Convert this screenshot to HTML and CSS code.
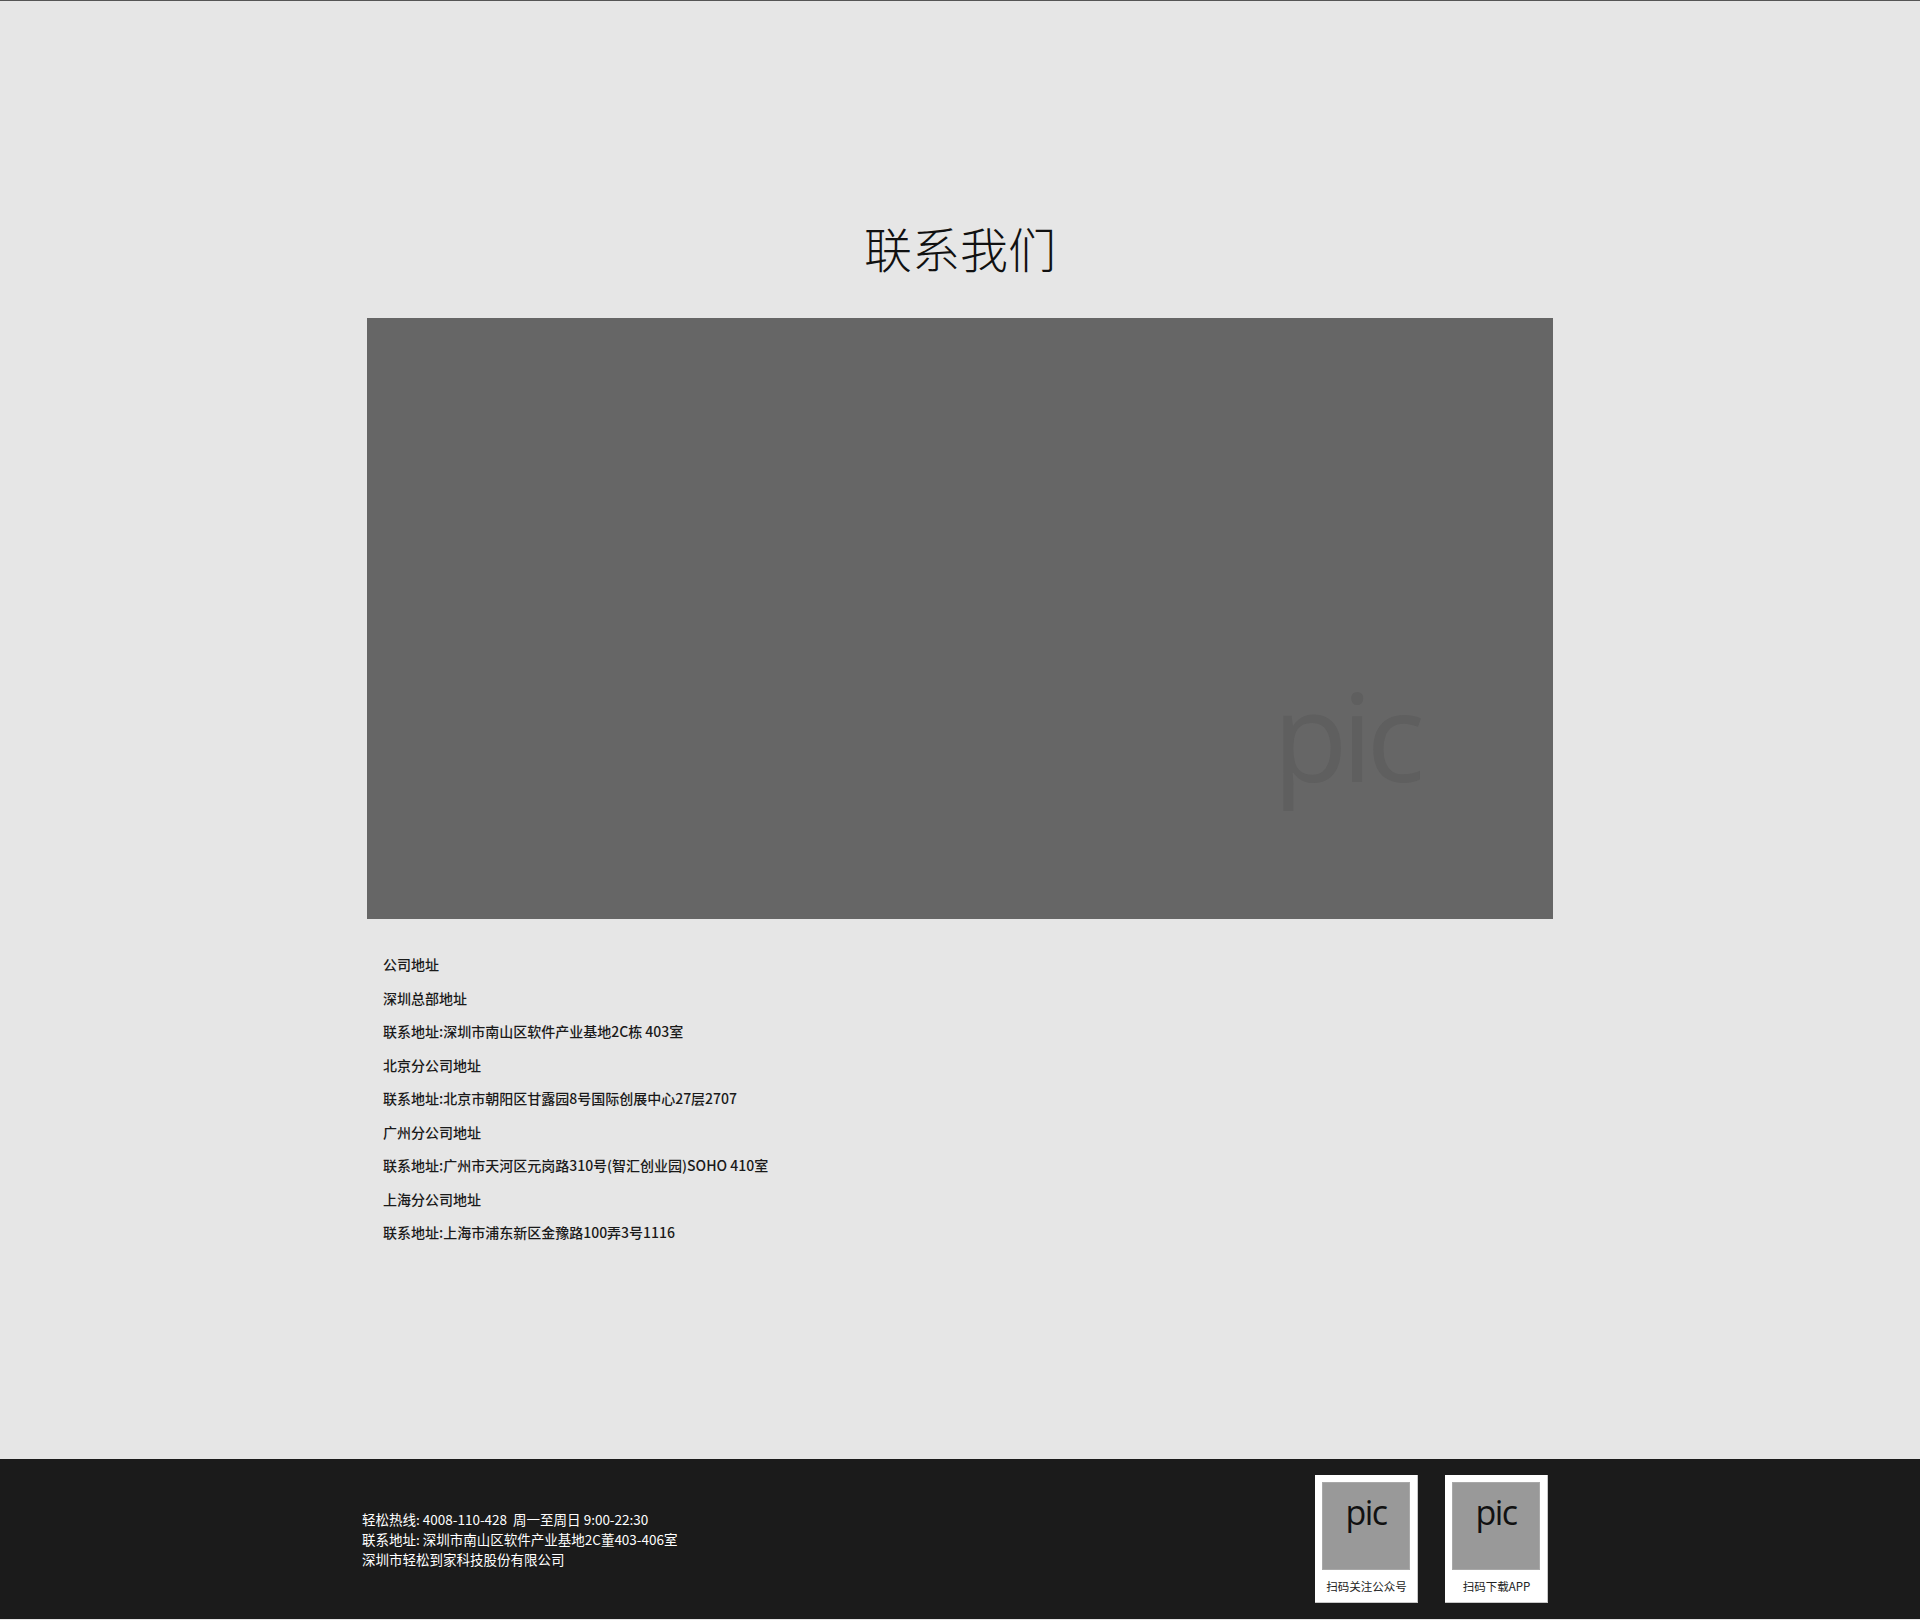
FILE: index.html
```html
<!DOCTYPE html>
<html lang="zh-CN">
<head>
<meta charset="utf-8">
<title>联系我们</title>
<link rel="stylesheet" href="styles.css">
</head>
<body>
<main class="page">
  <h1 class="title">联系我们</h1>
  <div class="pic-box"><span class="pic-text">pic</span></div>
  <ul class="addr">
    <li>公司地址</li>
    <li>深圳总部地址</li>
    <li>联系地址:深圳市南山区软件产业基地2C栋 403室</li>
    <li>北京分公司地址</li>
    <li>联系地址:北京市朝阳区甘露园8号国际创展中心27层2707</li>
    <li>广州分公司地址</li>
    <li>联系地址:广州市天河区元岗路310号(智汇创业园)SOHO 410室</li>
    <li>上海分公司地址</li>
    <li>联系地址:上海市浦东新区金豫路100弄3号1116</li>
  </ul>
</main>
<footer class="footer">
  <div class="footer-inner">
    <div class="footer-text">
      <p>轻松热线: 4008-110-428&nbsp; 周一至周日 9:00-22:30</p>
      <p>联系地址: 深圳市南山区软件产业基地2C董403-406室</p>
      <p>深圳市轻松到家科技股份有限公司</p>
    </div>
    <div class="qr-list">
      <div class="qr-card">
        <div class="qr-pic">pic</div>
        <div class="qr-label">扫码关注公众号</div>
      </div>
      <div class="qr-card">
        <div class="qr-pic">pic</div>
        <div class="qr-label">扫码下载APP</div>
      </div>
    </div>
  </div>
</footer>
</body>
</html>
```
FILE: styles.css
```css
html, body {
  margin: 0;
  padding: 0;
}
body {
  background: #e6e6e6;
  border-top: 1px solid #555555;
  font-family: "Noto Sans CJK SC", "Noto Sans", sans-serif;
  color: #333333;
}
.page {
  height: 1458px;
  box-sizing: border-box;
  padding-top: 222px;
}
.title {
  margin: 0 0 47px;
  font-size: 48px;
  line-height: 48px;
  font-weight: 300;
  text-align: center;
  color: #111111;
}
.pic-box {
  position: relative;
  width: 1186px;
  height: 601px;
  margin: 0 auto;
  background: #666666;
  overflow: hidden;
}
.pic-text {
  position: absolute;
  left: 906px;
  top: 356px;
  font-family: "Open Sans", sans-serif;
  font-size: 122px;
  line-height: 122px;
  letter-spacing: -6px;
  color: #5f5f5f;
}
.addr {
  width: 1186px;
  box-sizing: border-box;
  margin: 29px auto 0;
  padding: 0 0 0 16px;
  list-style: none;
  font-size: 14px;
  line-height: 33.5px;
  font-weight: 500;
  color: #1a1a1a;
}
.footer {
  height: 160px;
  background: #1b1b1b;
}
.footer-inner {
  width: 1196px;
  height: 100%;
  box-sizing: border-box;
  margin: 0 auto;
  padding-right: 10px;
  display: flex;
  align-items: center;
  justify-content: space-between;
}
.footer-text p {
  margin: 0;
  font-size: 13.5px;
  line-height: 20px;
  color: #ffffff;
}
.qr-list {
  display: flex;
  gap: 27px;
}
.qr-card {
  width: 103px;
  height: 128px;
  box-sizing: border-box;
  padding: 7px 7px 0;
  background: #ffffff;
  box-shadow: inset -1px -1px 0 #c8c8c8;
  display: flex;
  flex-direction: column;
}
.qr-pic {
  width: 88px;
  height: 88px;
  box-sizing: border-box;
  border: 1px solid #a8a8a8;
  background: #999999;
  font-family: "Open Sans", sans-serif;
  font-size: 34px;
  line-height: 34px;
  letter-spacing: -1.5px;
  padding-top: 12px;
  text-align: center;
  color: #111111;
}
.qr-label {
  flex: 1;
  display: flex;
  align-items: center;
  justify-content: center;
  font-size: 11.5px;
  color: #222222;
  padding-bottom: 2px;
}
```
